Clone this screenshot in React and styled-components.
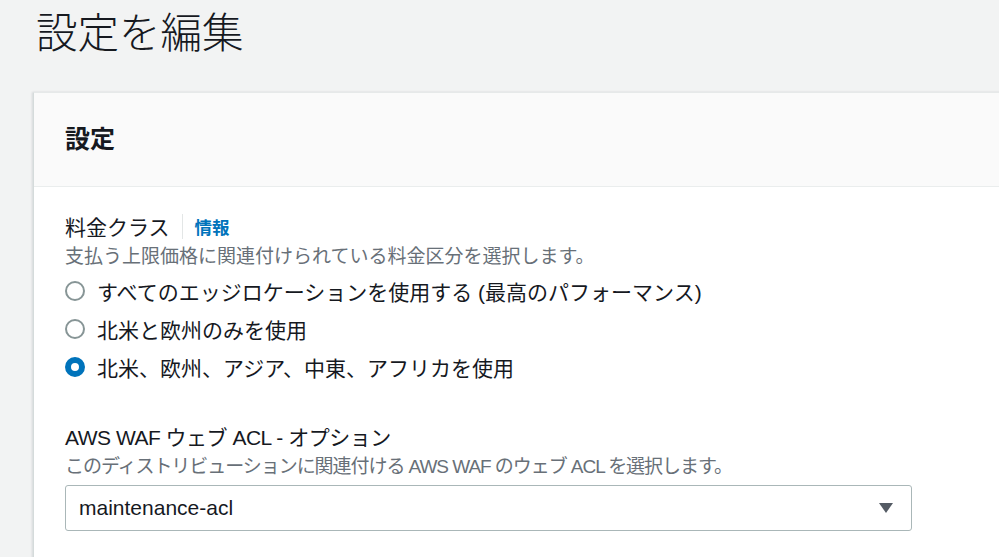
import React, { useState } from "react"
import styled, { createGlobalStyle } from "styled-components"

const Global = createGlobalStyle`
  html, body {
    margin: 0;
    padding: 0;
    background: #f2f3f3;
    overflow: hidden;
  }
  body {
    font-family: "Liberation Sans", "Noto Sans CJK JP", sans-serif;
    color: #16191f;
  }
`

const Page = styled.div`
  width: 999px;
  height: 557px;
  overflow: hidden;
`

const PageTitle = styled.h1`
  margin: 4px 0 0 36px;
  height: 88px;
  font-family: "Noto Sans CJK JP", sans-serif;
  font-size: 41.5px;
  font-weight: 300;
  line-height: 52px;
  color: #16191f;
`

const Card = styled.div`
  margin-left: 33px;
  width: 1100px;
  background: #ffffff;
  border-top: 1px solid #e6e9e9;
  border-left: 1px solid #d5dbdb;
  box-shadow: -1px 0 2px rgba(0, 22, 40, 0.12);
`

const CardHeader = styled.div`
  height: 94px;
  display: flex;
  align-items: center;
  padding: 0 0 6px 31px;
  box-sizing: border-box;
  background: #fafafa;
  border-bottom: 1px solid #eaeded;
`

const CardTitle = styled.h2`
  margin: 0;
  font-family: "Noto Sans CJK JP", sans-serif;
  font-size: 25px;
  font-weight: 700;
  color: #16191f;
`

const CardBody = styled.div`
  padding: 24px 31px 30px;
`

const Field = styled.div`
  margin-bottom: 35px;
`

const LabelRow = styled.div`
  display: flex;
  align-items: center;
  height: 30px;
`

const Label = styled.span`
  font-size: 21px;
  color: #16191f;
  letter-spacing: ${(p) => (p.$tight ? "-0.5px" : "0")};
`

const Divider = styled.span`
  width: 1px;
  height: 25px;
  background: #e3e6e6;
  margin: 0 12px 0 12px;
`

const InfoLink = styled.a`
  font-size: 17.5px;
  font-weight: 700;
  color: #0073bb;
  text-decoration: none;
`

const Description = styled.div`
  margin-top: 2px;
  font-size: 19px;
  color: #687078;
  line-height: 28px;
  letter-spacing: ${(p) => (p.$tight ? "-1.05px" : "0")};
`

const RadioList = styled.div`
  display: flex;
  flex-direction: column;
  margin-top: 1px;
`

const RadioRow = styled.label`
  display: flex;
  align-items: center;
  height: 38px;
  font-size: 21px;
  color: #16191f;
  cursor: pointer;
`

const RadioCircle = styled.span`
  width: 20px;
  height: 20px;
  box-sizing: border-box;
  border-radius: 50%;
  margin: 0 12px 0 0;
  border: ${(p) => (p.checked ? "6.5px solid #0073bb" : "2px solid #879596")};
  background: #ffffff;
  flex-shrink: 0;
`

const Select = styled.div`
  margin-top: 4px;
  width: 847px;
  height: 46px;
  box-sizing: border-box;
  border: 1px solid #aab7b8;
  border-radius: 3px;
  display: flex;
  align-items: center;
  justify-content: space-between;
  padding: 0 17px 0 13px;
  font-size: 21px;
  color: #16191f;
`

const Caret = styled.svg`
  width: 16px;
  height: 12px;
`

const options = [
  "すべてのエッジロケーションを使用する (最高のパフォーマンス)",
  "北米と欧州のみを使用",
  "北米、欧州、アジア、中東、アフリカを使用",
]

export default function App() {
  const [selected, setSelected] = useState(2)
  return (
    <Page>
      <Global />
      <PageTitle>設定を編集</PageTitle>
      <Card>
        <CardHeader>
          <CardTitle>設定</CardTitle>
        </CardHeader>
        <CardBody>
          <Field>
            <LabelRow>
              <Label>料金クラス</Label>
              <Divider />
              <InfoLink href="#">情報</InfoLink>
            </LabelRow>
            <Description>支払う上限価格に関連付けられている料金区分を選択します。</Description>
            <RadioList>
              {options.map((o, i) => (
                <RadioRow key={i} onClick={() => setSelected(i)}>
                  <RadioCircle checked={selected === i} />
                  {o}
                </RadioRow>
              ))}
            </RadioList>
          </Field>
          <Field>
            <LabelRow>
              <Label $tight>AWS WAF ウェブ ACL - オプション</Label>
            </LabelRow>
            <Description $tight>
              このディストリビューションに関連付ける AWS WAF のウェブ ACL を選択します。
            </Description>
            <Select>
              maintenance-acl
              <Caret viewBox="0 0 16 12">
                <path d="M1 1h14L8 11z" fill="#545b64" />
              </Caret>
            </Select>
          </Field>
        </CardBody>
      </Card>
    </Page>
  )
}
